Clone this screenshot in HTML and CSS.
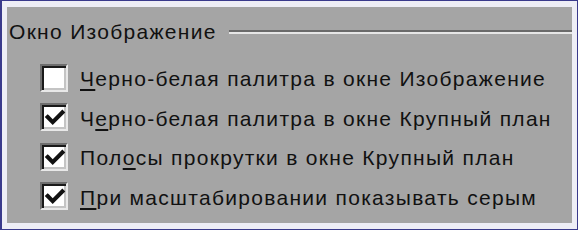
FILE: index.html
```html
<!DOCTYPE html>
<html lang="ru">
<head>
<meta charset="utf-8">
<title>Окно Изображение</title>
<link rel="stylesheet" href="styles.css">
</head>
<body>
<div class="frame">
  <div class="panel">
    <div class="group-head">
      <span class="group-title">Окно Изображение</span>
      <span class="rule"></span>
    </div>
    <ul class="options">
      <li class="option">
        <span class="box"></span>
        <span class="label"><u>Ч</u>ерно-белая палитра в окне Изображение</span>
      </li>
      <li class="option">
        <span class="box"><svg class="tick" viewBox="0 0 24 24"><path d="M4 11 L9.5 16.5 L20 6" /></svg></span>
        <span class="label">Ч<u>е</u>рно-белая палитра в окне Крупный план</span>
      </li>
      <li class="option">
        <span class="box"><svg class="tick" viewBox="0 0 24 24"><path d="M4 11 L9.5 16.5 L20 6" /></svg></span>
        <span class="label">Пол<u>о</u>сы прокрутки в окне Крупный план</span>
      </li>
      <li class="option">
        <span class="box"><svg class="tick" viewBox="0 0 24 24"><path d="M4 11 L9.5 16.5 L20 6" /></svg></span>
        <span class="label"><u>П</u>ри масштабировании показывать серым</span>
      </li>
    </ul>
  </div>
</div>
</body>
</html>
```

FILE: styles.css
```css
html, body {
  margin: 0;
  padding: 0;
  background: #ffffff;
}

.frame {
  width: 578px;
  height: 230px;
  box-sizing: border-box;
  border: 1px solid #3a3a8c;
  border-left-width: 2px;
  background: #eeeef6;
  padding: 6px 5px 6px 5px;
  display: flex;
}

.panel {
  flex: 1;
  background: #a5a5a5;
  padding-left: 2px;
  font-family: "Liberation Sans", Arial, sans-serif;
  font-size: 21px;
  letter-spacing: 1.3px;
  color: #111111;
}

.group-head {
  display: flex;
  align-items: center;
  height: 49px;
}

.group-title {
  white-space: nowrap;
}

.rule {
  flex: 1;
  margin-left: 12px;
  height: 0;
  border-top: 2px solid #6a6a6a;
  border-bottom: 2px solid #e6e6e6;
}

.options {
  list-style: none;
  margin: 2px 0 0 0;
  padding: 0 0 0 31px;
}

.option {
  display: flex;
  align-items: center;
  height: 39.5px;
}

.box {
  width: 28px;
  height: 28px;
  box-sizing: border-box;
  border: 2px solid;
  border-color: #6e6e6e #e8e8e8 #e8e8e8 #6e6e6e;
  box-shadow: inset 2px 2px 0 #1a1a1a, inset -2px -2px 0 #c4c4c4;
  background: #ffffff;
  display: flex;
  align-items: center;
  justify-content: center;
  flex: none;
}

.tick {
  width: 22px;
  height: 22px;
  margin: 2px 0 0 2px;
}

.tick path {
  fill: none;
  stroke: #111111;
  stroke-width: 4.5;
  stroke-linecap: square;
  stroke-linejoin: miter;
}

.label {
  margin-left: 12px;
  margin-top: 3px;
  white-space: nowrap;
}

.label u {
  text-decoration-thickness: 2px;
  text-underline-offset: 3px;
}
```
